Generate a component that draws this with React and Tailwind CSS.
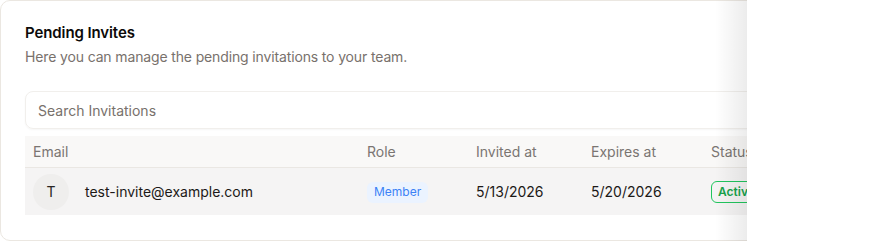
export default function App() {
  const font = { fontFamily: 'Inter, "Noto Sans", sans-serif' };
  return (
    <div className="w-[896px] h-[241px] bg-white" style={font}>
      <div className="relative w-[747px] h-[241px] overflow-hidden">
        <div className="w-[1000px] h-[241px] rounded-[10px] border border-[#ebe7e1] bg-white px-6 pt-[22px]">
          <h2 className="text-[15px] leading-5 font-semibold text-[#0c0a09] tracking-[-0.1px]">Pending Invites</h2>
          <p className="mt-[4px] text-[14px] leading-5 text-[#78716c] tracking-[-0.14px]">Here you can manage the pending invitations to your team.</p>
          <div className="mt-[24px] h-[38px] rounded-lg border border-[#f1efec] shadow-[0_1px_2px_rgba(0,0,0,0.04)] flex items-center pl-[12px] text-[14px] text-[#78716c]">
            Search Invitations
          </div>
          <div className="mt-[7px]">
            <div className="flex h-[32px] items-center bg-[#f9f8f7] border-b border-[#eae7e3] text-[14px] text-[#7a7572]">
              <div className="w-[334px] pl-2">Email</div>
              <div className="w-[109px] pl-2">Role</div>
              <div className="w-[115px] pl-2">Invited at</div>
              <div className="w-[120px] pl-2">Expires at</div>
              <div className="pl-2">Status</div>
            </div>
            <div className="flex h-[47px] items-center bg-[#f5f4f4] text-[14px] text-[#1c1917]">
              <div className="w-[334px] pl-2 flex items-center gap-4">
                <div className="w-9 h-9 rounded-full bg-[#efeeed] flex items-center justify-center text-[14px] text-[#292524]">T</div>
                <span>test-invite@example.com</span>
              </div>
              <div className="w-[109px] pl-2">
                <span className="inline-flex items-center h-[21px] px-[7px] rounded-md bg-[#ebf3ff] text-[12px] text-[#3b82f6]">Member</span>
              </div>
              <div className="w-[115px] pl-2">5/13/2026</div>
              <div className="w-[120px] pl-2">5/20/2026</div>
              <div className="pl-2">
                <span className="inline-flex items-center h-[22px] px-[6px] rounded-md border border-[#22c55e] text-[12px] font-semibold text-[#16a34a]">Active</span>
              </div>
            </div>
          </div>
        </div>
        <div className="absolute right-0 top-0 h-full w-[32px] bg-gradient-to-r from-transparent to-[rgba(0,0,0,0.075)] pointer-events-none" />
      </div>
    </div>
  );
}
